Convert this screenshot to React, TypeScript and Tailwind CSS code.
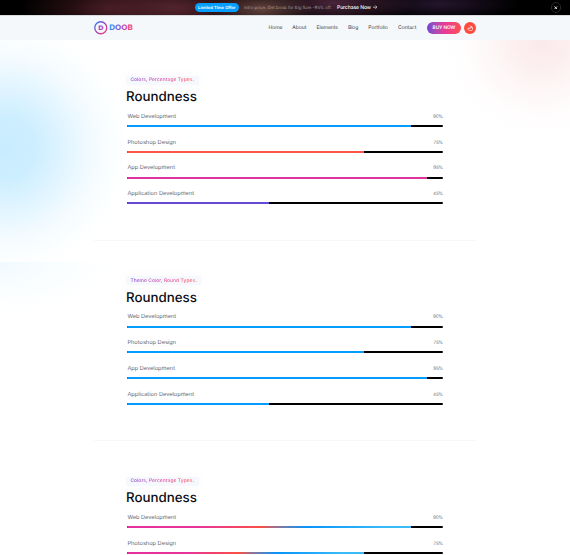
type Skill = { label: string; value: number };

const skills: Skill[] = [
  { label: "Web Development", value: 90 },
  { label: "Photoshop Design", value: 75 },
  { label: "App Development", value: 95 },
  { label: "Application Development", value: 45 },
];

const theme = "bg-[#059dff]";
const rainbow =
  "bg-[linear-gradient(90deg,#e42f9f_0%,#e6349b_25%,#fb4f44_47%,#7f78a2_54%,#0793fa_63%,#3abdf7_92%,#3abdf7_100%)]";

const sections = [
  { eyebrow: "Colors, Percentage Types.", fills: [theme, "bg-[#ff5549]", "bg-[#dc359e]", "bg-[#6549d5]"] },
  { eyebrow: "Theme Color, Round Types.", fills: [theme, theme, theme, theme] },
  { eyebrow: "Colors, Percentage Types.", fills: [rainbow, rainbow] },
];

const nav: [string, string][] = [
  ["Home", "w-[13.6px]"],
  ["About", "w-[14px]"],
  ["Elements", "w-[21.2px]"],
  ["Blog", "w-[10.2px]"],
  ["Portfolio", "w-[19.6px]"],
  ["Contact", "w-[18.4px]"],
];

function Promo() {
  return (
    <div className="relative flex h-[15.4px] items-center bg-black bg-[radial-gradient(ellipse_50px_20px_at_262px_9px,#62423d_0%,transparent_100%),radial-gradient(ellipse_100px_28px_at_175px_8px,#54242c_0%,transparent_100%),radial-gradient(ellipse_80px_22px_at_335px_3px,#49243a_0%,transparent_100%),radial-gradient(ellipse_80px_16px_at_440px_4px,#24152c_0%,transparent_100%),radial-gradient(ellipse_90px_28px_at_110px_8px,#40191f_0%,transparent_100%)] pl-[195px] whitespace-nowrap">
      <span className="flex h-[9px] w-[43.6px] items-center justify-center rounded-full bg-[#059dff] pt-[2px] text-[4.2px] font-semibold text-white">
        Limited Time Offer
      </span>
      <span className="ml-[5.5px] w-[87.5px] pt-[3px] text-[4.3px] tracking-[0.01px] text-[#a59a9b]">
        Intro price. Get Doob for Big Sale -95% off.
      </span>
      <span className="ml-[5.4px] flex items-center gap-[1.8px] text-[5px] font-medium text-white">
        <span className="pt-[2px] tracking-[-0.06px]">Purchase Now</span>
        <svg className="size-[4.4px]" viewBox="0 0 12 12" fill="none" stroke="currentColor" strokeWidth="1.7">
          <path d="M0 6h10.5M6.5 1.5 11 6l-4.5 4.5" />
        </svg>
      </span>
      <span className="mr-[9px] ml-auto flex size-[10.5px] items-center justify-center rounded-full border-[0.5px] border-[#292929] text-white">
        <svg className="size-[3.6px]" viewBox="0 0 8 8" stroke="currentColor" strokeWidth="1.9">
          <path d="m1 1 6 6M7 1 1 7" />
        </svg>
      </span>
    </div>
  );
}

function Logo() {
  return (
    <div className="flex items-center">
      <svg className="h-[13.5px] w-[39px]" viewBox="0 0 78 27" fill="none">
        <defs>
          <linearGradient id="ring" x1="0" y1="0" x2="27" y2="27" gradientUnits="userSpaceOnUse">
            <stop stopColor="#1b8ff5" />
            <stop offset=".5" stopColor="#a63cc0" />
            <stop offset="1" stopColor="#ff4159" />
          </linearGradient>
          <linearGradient id="word" x1="31" y1="9" x2="76" y2="19" gradientUnits="userSpaceOnUse">
            <stop stopColor="#1596fb" />
            <stop offset=".38" stopColor="#7952d4" />
            <stop offset=".7" stopColor="#cc3aa4" />
            <stop offset="1" stopColor="#ff4353" />
          </linearGradient>
        </defs>
        <circle cx="13.5" cy="13.5" r="12" stroke="url(#ring)" strokeWidth="2.7" />
        <text x="8.6" y="18" fontFamily="Inter, sans-serif" fontWeight="800" fontSize="12.5" textLength="10.5" lengthAdjust="spacingAndGlyphs" fill="url(#ring)">D</text>
        <text x="30.5" y="18.8" fontFamily="Inter, sans-serif" fontWeight="700" fontSize="15" textLength="47" lengthAdjust="spacingAndGlyphs" fill="url(#word)">DOOB</text>
      </svg>
    </div>
  );
}

function Header() {
  return (
    <header className="relative h-[24.8px] border-t border-[#d9dcdf] bg-[#f4f8fb]">
      <div className="mx-auto flex h-full w-[382px] items-center pb-[1px] whitespace-nowrap">
        <Logo />
        <nav className="ml-auto flex gap-[10.2px] pt-[1.2px] text-[5.1px] tracking-[-0.07px] text-[#3f444a]">
          {nav.map(([item, width]) => (
            <a key={item} className={width}>{item}</a>
          ))}
        </nav>
        <span className="ml-[10.2px] flex h-[12px] w-[34.6px] items-center justify-center rounded-full bg-linear-to-r from-[#7145d2] via-[#e63998] to-[#ff4c4e] pt-[2.4px] text-[4.7px] font-semibold tracking-[-0.05px] text-white">
          BUY NOW
        </span>
        <span className="ml-[2.8px] flex size-[12px] items-center justify-center rounded-full bg-[#ff4b3e] text-white">
          <svg className="size-[6.4px]" viewBox="0 0 24 24" fill="none" stroke="currentColor" strokeWidth="2.8" strokeLinejoin="round">
            <path d="M11 2c5 4 4 8 1 11-1 1-3 0-3-2-2 1-5 0-6 2 0 11 18 12 18 1 0-4-2-7-4-9 1 4-1 5-3 6" />
          </svg>
        </span>
      </div>
    </header>
  );
}

function Progress({ label, value, fill }: Skill & { fill: string }) {
  return (
    <div className="h-[25.75px] px-[1.3px]">
      <div className="flex h-[7.8px] items-end justify-between leading-[7px] text-[#65686d]">
        <span className="pl-[0.3px] text-[5.65px] tracking-[0px]">{label}</span>
        <span className="text-[4.6px] tracking-[-0.16px] text-[#6c6f74]">{value}%</span>
      </div>
      <div className="mt-[4.4px] h-[2px] overflow-hidden rounded-full bg-black">
        <div className={"h-full " + fill} style={{ width: value + "%" }} />
      </div>
    </div>
  );
}

export default function App() {
  return (
    <div className="relative h-[555px] w-[570px] overflow-hidden bg-white font-['Inter',sans-serif] [text-rendering:geometricPrecision]">
      <div className="absolute top-[40px] left-0 h-[222px] w-[140px] bg-[radial-gradient(circle_125px_at_4px_108px,#c8ecff_0%,#cdeeff_25%,#e2f5ff_50%,#f4fbff_72%,#fbfeff_88%,transparent_100%)]" />
      <div className="absolute top-[262px] left-0 h-[50px] w-[110px] bg-[radial-gradient(ellipse_110px_50px_at_0px_0px,#f0faff_0%,#f8fdff_45%,transparent_100%)]" />
      <div className="absolute top-[40px] right-0 h-[100px] w-[140px] bg-[radial-gradient(circle_at_112px_0px,#fbe9eb_0%,#fceeef_25px,#fef8f8_55px,#fffdfd_78px,transparent_98px)]" />
      <Promo />
      <Header />
      <main className="relative mx-auto w-[382px]">
        {sections.map((section, index) => (
          <section key={index} className="h-[200.5px] border-b-[1px] border-[#f7f7f8] px-[31.8px] pt-[35.4px]">
            <div className="flex h-[9.2px] w-fit items-center rounded-[1.5px] bg-[#f5f8fc] px-[4.6px] shadow-[0_0_10px_4px_rgba(0,0,0,0.012)]">
              <span className="bg-linear-to-r from-[#854bd3] via-[#e34da5] to-[#ff625c] bg-clip-text pt-[1px] text-[4.9px] leading-[9px] font-medium tracking-[0.07px] whitespace-nowrap text-transparent">
                {section.eyebrow}
              </span>
            </div>
            <h2 className="mt-[3.7px] h-[18px] pl-[0.3px] text-[13.3px] leading-[18px] font-medium text-[#080b12]">Roundness</h2>
            <div className="mt-[6.6px]">
              {section.fills.map((fill, row) => (
                <Progress key={row} {...skills[row]} fill={fill} />
              ))}
            </div>
          </section>
        ))}
      </main>
    </div>
  );
}
